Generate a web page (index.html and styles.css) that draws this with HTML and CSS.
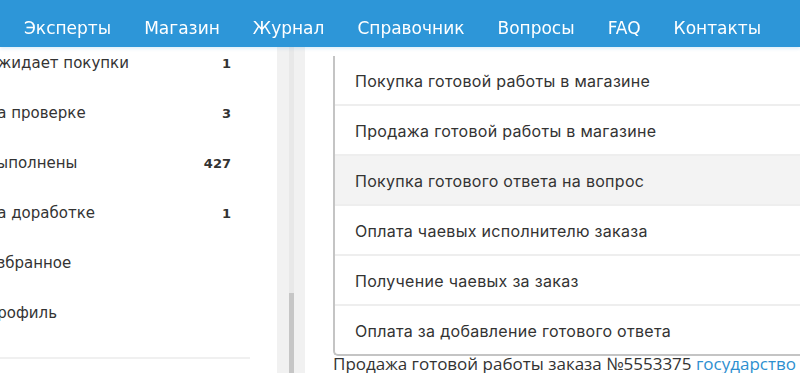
FILE: index.html
```html
<!DOCTYPE html>
<html>
<head>
    <title>Операции</title>
    <link rel="stylesheet" href="styles.css">
</head>
<body>
    <header class="topbar">
        <nav class="topnav">
            <a href="#">Эксперты</a>
            <a href="#">Магазин</a>
            <a href="#">Журнал</a>
            <a href="#">Справочник</a>
            <a href="#">Вопросы</a>
            <a href="#">FAQ</a>
            <a href="#">Контакты</a>
        </nav>
    </header>

    <div class="page">
        <aside class="sidebar">
            <ul class="side-menu">
                <li><span>Ожидает покупки</span><b>1</b></li>
                <li><span>На проверке</span><b>3</b></li>
                <li><span>Выполнены</span><b>427</b></li>
                <li><span>На доработке</span><b>1</b></li>
                <li><span>Избранное</span></li>
                <li><span>Профиль</span></li>
            </ul>
            <div class="side-line"></div>
        </aside>

        <div class="scroll-track">
            <div class="scroll-rail">
                <div class="scroll-thumb"></div>
            </div>
        </div>

        <main class="content">
            <ul class="dropdown">
                <li>Покупка готовой работы в магазине</li>
                <li>Продажа готовой работы в магазине</li>
                <li class="active">Покупка готового ответа на вопрос</li>
                <li>Оплата чаевых исполнителю заказа</li>
                <li>Получение чаевых за заказ</li>
                <li>Оплата за добавление готового ответа</li>
            </ul>
            <p class="op-line">Продажа готовой работы заказа №5553375 <a href="#">государство</a></p>
        </main>
    </div>
</body>
</html>
```

FILE: styles.css
```css
body {
    margin: 0;
    background: #fff;
    color: #333;
    font-family: 'DejaVu Sans', sans-serif;
    overflow: hidden;
}

.topbar {
    position: fixed;
    top: 0;
    left: 0;
    right: 0;
    height: 47px;
    background: #2d96d8;
    box-shadow: 0 2px 3px rgba(45, 150, 216, 0.15);
    z-index: 10;
}

.topnav {
    display: flex;
    gap: 33px;
    padding-left: 24px;
    padding-top: 8px;
    box-sizing: border-box;
    height: 100%;
    align-items: center;
}

.topnav a {
    color: #fff;
    text-decoration: none;
    font-size: 17px;
    white-space: nowrap;
}

.page {
    display: flex;
    height: 373px;
}

.sidebar {
    width: 264px;
    margin-left: -14px;
    flex-shrink: 0;
    padding-top: 38px;
}

.side-menu {
    list-style: none;
    margin: 0;
    padding: 0;
}

.side-menu li {
    display: flex;
    justify-content: space-between;
    align-items: center;
    height: 50px;
    padding-right: 19px;
    font-size: 15px;
}

.side-menu b {
    font-size: 13px;
}

.side-line {
    margin-top: 19px;
    height: 2px;
    background: #f0f0f0;
}

.scroll-track {
    width: 28px;
    margin-left: 27px;
    margin-top: 47px;
    background: #f1f1f1;
    display: flex;
    justify-content: center;
    flex-shrink: 0;
}

.scroll-rail {
    width: 5px;
    background: #e8e8e8;
    padding-top: 246px;
}

.scroll-thumb {
    height: 100px;
    background: #c6c6c6;
}

.content {
    margin-left: 28px;
    padding-top: 56px;
    flex: 1;
    min-width: 0;
}

.dropdown {
    list-style: none;
    margin: 0;
    padding: 0;
    width: 600px;
    border-left: 2px solid #c4c4c4;
    border-bottom: 2px solid #c4c4c4;
    border-bottom-left-radius: 5px;
}

.dropdown li {
    height: 48px;
    line-height: 50px;
    padding-left: 20px;
    border-bottom: 2px solid #eeeeee;
    font-family: 'Inter', sans-serif;
    font-size: 16px;
    letter-spacing: 0.3px;
    color: #333;
    white-space: nowrap;
}

.dropdown li:last-child {
    border-bottom: none;
}

.dropdown li.active {
    background: #f3f3f3;
}

.op-line {
    margin: -2px 0 0;
    font-family: 'Open Sans', sans-serif;
    font-size: 17px;
    line-height: 19px;
    white-space: nowrap;
}

.op-line a {
    color: #2d8fd0;
    text-decoration: none;
}
```
